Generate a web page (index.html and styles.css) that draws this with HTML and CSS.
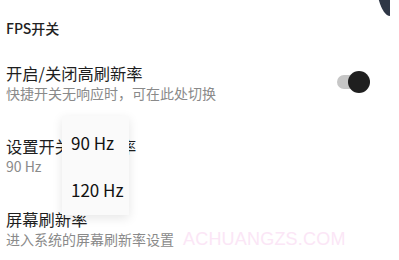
FILE: index.html
```html
<!DOCTYPE html>
<html lang="zh">
<head>
<meta charset="utf-8">
<link rel="stylesheet" href="styles.css">
</head>
<body>
<div class="corner"></div>
<div class="page">
  <div class="header">FPS开关</div>
  <div class="list">
    <div class="row">
      <div class="texts">
        <div class="title">开启/关闭高刷新率</div>
        <div class="sub">快捷开关无响应时，可在此处切换</div>
      </div>
      <div class="toggle"><span class="track"></span><span class="knob"></span></div>
    </div>
    <div class="row">
      <div class="texts">
        <div class="title">设置开关高刷新率</div>
        <div class="sub">90 Hz</div>
      </div>
    </div>
    <div class="row">
      <div class="texts">
        <div class="title">屏幕刷新率</div>
        <div class="sub">进入系统的屏幕刷新率设置</div>
      </div>
    </div>
  </div>
</div>
<div class="watermark">ACHUANGZS.COM</div>
<div class="menu">
  <div class="item">90 Hz</div>
  <div class="item">120 Hz</div>
</div>
</body>
</html>
```
FILE: styles.css
```css
html, body {
  margin: 0;
  padding: 0;
  background: #ffffff;
}
body {
  width: 399px;
  height: 260px;
  overflow: hidden;
  position: relative;
  font-family: "Noto Sans CJK SC", "Noto Sans", sans-serif;
  color: #1f1f1f;
}
.page {
  padding: 18px 29px 0 6px;
}
.header {
  font-size: 14px;
  line-height: 20px;
  font-weight: 500;
  color: #222;
  margin-bottom: 25px;
}
.list {
  display: flex;
  flex-direction: column;
  gap: 32px;
}
.row {
  display: flex;
  align-items: center;
  justify-content: space-between;
}
.title {
  font-size: 16.3px;
  line-height: 20px;
  color: #1e1e1e;
}
.sub {
  font-size: 14px;
  line-height: 21px;
  color: #8a8a8a;
}
.toggle {
  position: relative;
  width: 33px;
  height: 22px;
  margin-top: -4px;
}
.track {
  position: absolute;
  left: 0;
  top: 4px;
  width: 22px;
  height: 14px;
  border-radius: 7px;
  background: #c6c6c6;
}
.knob {
  position: absolute;
  right: 0;
  top: 0;
  width: 22px;
  height: 22px;
  border-radius: 50%;
  background: #1f1f1f;
}
.corner {
  position: absolute;
  left: 374px;
  top: -40px;
  width: 16px;
  height: 56px;
  background: #2f3746;
  border-bottom-left-radius: 16px 56px;
}
.watermark {
  position: absolute;
  left: 183px;
  top: 228px;
  font-family: "Liberation Sans", sans-serif;
  font-size: 18px;
  line-height: 22px;
  color: #fbe6f6;
  letter-spacing: 0.2px;
}
.menu {
  position: absolute;
  left: 62px;
  top: 116px;
  width: 67px;
  height: 99px;
  background: #fafafa;
  box-shadow: 0 3px 10px rgba(0, 0, 0, 0.1);
  display: flex;
  flex-direction: column;
  padding-top: 15px;
  box-sizing: border-box;
}
.item {
  font-size: 17px;
  line-height: 24px;
  padding-left: 9px;
  color: #111;
  margin-bottom: 23px;
}
```
